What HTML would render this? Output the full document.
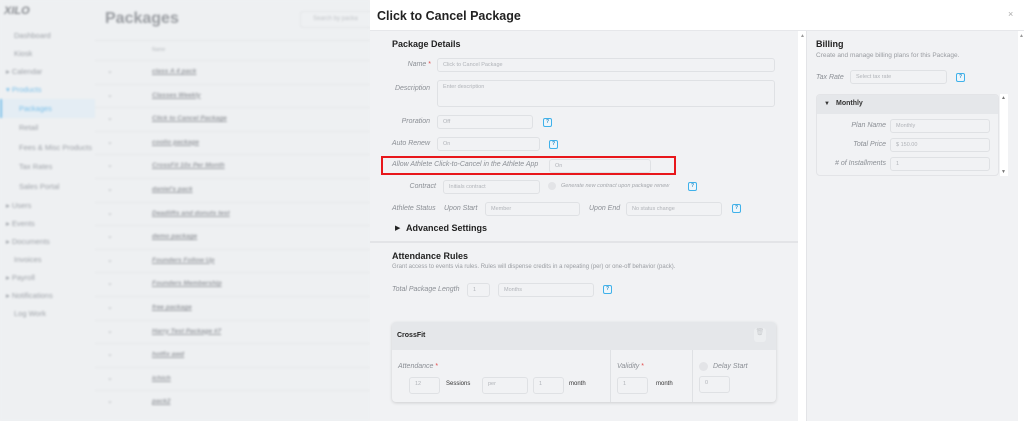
<!DOCTYPE html>
<html><head><meta charset="utf-8"><style>
*{box-sizing:border-box;margin:0;padding:0}
body{width:1024px;height:421px;overflow:hidden;font-family:"Liberation Sans",sans-serif;background:#f0f1f3;position:relative}
.bg{position:absolute;left:0;top:0;width:370px;height:421px;filter:blur(1.1px);color:#9a9ea4}
.side{position:absolute;left:0;top:0;width:95px;height:421px;background:#eef0f2}
.side div{position:absolute;font-size:7.5px;color:#9ea2a8}
.main{position:absolute;left:95px;top:0;width:275px;height:421px;background:#eef0f2}
.a{position:absolute}
.m{position:absolute;color:#333}
.lbl{position:absolute;font-size:7px;font-style:italic;color:#8b8f95;text-align:right}
.in{position:absolute;height:14px;border:1px solid #dfe1e4;border-radius:3px;background:#f1f2f4;font-size:5.5px;color:#b0b3b8;padding:3px 5px}
.q{position:absolute;width:9px;height:9px;border:1.5px solid #3fb1ea;border-radius:2px;font-size:5px;font-weight:bold;color:#2a8bc4;text-align:center;line-height:6px;background:#eef6fb}
.red{color:#e24b4b;font-style:normal}
</style></head><body>
<div class="bg">
 <div class="side">
  <div style="left:4px;top:5px;font-size:11px;font-weight:bold;color:#8a8d92;font-style:italic">XILO</div>
  <div style="left:14px;top:31px">Dashboard</div>
  <div style="left:14px;top:49px">Kiosk</div>
  <div style="left:6px;top:67px">▸ Calendar</div>
  <div style="left:6px;top:85px;color:#7cc1ea">▾ Products</div>
  <div style="left:0;top:99px;width:95px;height:19px;background:#e4edf4;border-left:2px solid #7cc1ea"></div>
  <div style="left:19px;top:104px;color:#7cc1ea">Packages</div>
  <div style="left:19px;top:123px">Retail</div>
  <div style="left:19px;top:143px">Fees &amp; Misc Products</div>
  <div style="left:19px;top:162px">Tax Rates</div>
  <div style="left:19px;top:182px">Sales Portal</div>
  <div style="left:6px;top:201px">▸ Users</div>
  <div style="left:6px;top:219px">▸ Events</div>
  <div style="left:6px;top:237px">▸ Documents</div>
  <div style="left:14px;top:255px">Invoices</div>
  <div style="left:6px;top:273px">▸ Payroll</div>
  <div style="left:6px;top:291px">▸ Notifications</div>
  <div style="left:14px;top:309px">Log Work</div>
 </div>
 <div class="main">
  <div class="a" style="left:10px;top:10px;font-size:16px;font-weight:bold;color:#9a9da2">Packages</div>
  <div class="a" style="left:205px;top:11px;width:80px;height:17px;border:1px solid #e2e4e6;border-radius:3px;font-size:6px;padding:4px 12px;color:#c0c3c7">Search by packa</div>
  <div class="a" style="left:0;top:40px;width:275px;height:1px;background:#e2e4e6"></div>
  <div class="a" style="left:57px;top:47px;font-size:5px;color:#b8bbbf">Name</div>
  <div id="rows"></div>
 </div>
</div>
<script>
var n=["class A 4 pack","Classes Weekly","Click to Cancel Package","coolio package","CrossFit 10x Per Month","daniel's pack","Deadlifts and donuts test","demo package","Founders Follow Up","Founders Membership","free package","Harry Test Package #7","hotfix awd","ichich","pack2"];
var h="";n.forEach(function(t,i){var y=72+i*23.6;h+='<div class="a" style="left:0;top:'+(y-12)+'px;width:275px;height:1px;background:#e4e6e8"></div><div class="a" style="left:12px;top:'+(y-5)+'px;font-size:7px;color:#b3b6ba">⌄</div><div class="a" style="left:57px;top:'+(y-4)+'px;font-size:6.5px;font-style:italic;font-weight:bold;text-decoration:underline;color:#9a9da2">'+t+'</div>'});
document.getElementById("rows").innerHTML=h;
</script>

<div class="a" style="left:370px;top:0;width:654px;height:31px;background:#fff;border-bottom:1px solid #e6e7ea"></div>
<div class="m" style="left:377px;top:9px;font-size:12.5px;font-weight:bold;color:#222">Click to Cancel Package</div>
<div class="m" style="left:1008px;top:9px;font-size:9px;color:#aaa">×</div>
<div class="a" style="left:370px;top:31px;width:428px;height:390px;background:#f1f2f4"></div>
<div class="a" style="left:798px;top:31px;width:8px;height:390px;background:#fff"></div>
<div class="m" style="left:800px;top:33px;font-size:5px;color:#999">▲</div>
<div class="a" style="left:806px;top:31px;width:212px;height:390px;background:#f1f2f4;border-left:1px solid #e3e4e7"></div>
<div class="a" style="left:1018px;top:31px;width:6px;height:390px;background:#fff"></div>
<div class="m" style="left:1019px;top:33px;font-size:5px;color:#999">▲</div>

<div class="m" style="left:392px;top:39px;font-size:9px;font-weight:bold;color:#222">Package Details</div>
<div class="lbl" style="left:380px;top:61px;width:51px">Name <span class="red">*</span></div>
<div class="in" style="left:437px;top:58px;width:338px">Click to Cancel Package</div>
<div class="lbl" style="left:380px;top:85px;width:50px">Description</div>
<div class="in" style="left:437px;top:80px;width:338px;height:27px">Enter description</div>
<div class="lbl" style="left:380px;top:118px;width:50px">Proration</div>
<div class="in" style="left:437px;top:115px;width:96px">Off</div>
<div class="q" style="left:543px;top:118px">?</div>
<div class="lbl" style="left:380px;top:140px;width:50px">Auto Renew</div>
<div class="in" style="left:437px;top:137px;width:103px">On</div>
<div class="q" style="left:549px;top:140px">?</div>
<div class="a" style="left:381px;top:156px;width:295px;height:19px;border:2px solid #e8171b"></div>
<div class="lbl" style="left:392px;top:161px;text-align:left">Allow Athlete Click-to-Cancel in the Athlete App</div>
<div class="in" style="left:549px;top:159px;width:102px">On</div>
<div class="lbl" style="left:380px;top:183px;width:56px">Contract</div>
<div class="in" style="left:443px;top:180px;width:97px">Initials contract</div>
<div class="a" style="left:548px;top:182px;width:8px;height:8px;border-radius:50%;background:#e3e4e7"></div>
<div class="lbl" style="left:561px;top:183px;font-size:5.5px;color:#a5a8ad">Generate new contract upon package renew</div>
<div class="q" style="left:688px;top:182px">?</div>
<div class="lbl" style="left:392px;top:205px;text-align:left">Athlete Status</div>
<div class="lbl" style="left:444px;top:205px;text-align:left">Upon Start</div>
<div class="in" style="left:485px;top:202px;width:95px">Member</div>
<div class="lbl" style="left:589px;top:205px;text-align:left">Upon End</div>
<div class="in" style="left:626px;top:202px;width:96px">No status change</div>
<div class="q" style="left:732px;top:204px">?</div>
<div class="m" style="left:395px;top:224px;font-size:7px;color:#222">▶</div>
<div class="m" style="left:406px;top:223px;font-size:9px;font-weight:bold;color:#222">Advanced Settings</div>
<div class="a" style="left:370px;top:241px;width:428px;height:2px;background:#e3e4e7"></div>

<div class="m" style="left:392px;top:251px;font-size:9px;font-weight:bold;color:#222">Attendance Rules</div>
<div class="m" style="left:392px;top:264px;font-size:6px;color:#9a9da2">Grant access to events via rules. Rules will dispense credits in a repeating (per) or one-off behavior (pack).</div>
<div class="lbl" style="left:392px;top:286px;text-align:left">Total Package Length</div>
<div class="in" style="left:467px;top:283px;width:23px">1</div>
<div class="in" style="left:498px;top:283px;width:96px">Months</div>
<div class="q" style="left:603px;top:285px">?</div>
<div class="a" style="left:392px;top:322px;width:384px;height:80px;border-radius:4px;background:#f1f2f4;box-shadow:0 1px 3px rgba(0,0,0,.15);overflow:hidden">
 <div class="a" style="left:0;top:0;width:384px;height:28px;background:#e5e7ea"></div>
 <div class="m" style="left:5px;top:10px;font-size:7px;font-weight:bold;color:#222">CrossFit</div>
 <div class="a" style="left:362px;top:6px;width:12px;height:14px;border-radius:3px;background:#eceef0;font-size:7px;color:#c9cbce;text-align:center">🗑</div>
 <div class="a" style="left:218px;top:28px;width:1px;height:52px;background:#dfe1e4"></div>
 <div class="a" style="left:300px;top:28px;width:1px;height:52px;background:#dfe1e4"></div>
 <div class="lbl" style="left:6px;top:41px;text-align:left">Attendance <span class="red">*</span></div>
 <div class="in" style="left:17px;top:55px;width:31px;height:17px">12</div>
 <div class="m" style="left:54px;top:59px;font-size:6px">Sessions</div>
 <div class="in" style="left:90px;top:55px;width:46px;height:17px">per</div>
 <div class="in" style="left:141px;top:55px;width:31px;height:17px">1</div>
 <div class="m" style="left:177px;top:59px;font-size:6px">month</div>
 <div class="lbl" style="left:225px;top:41px;text-align:left">Validity <span class="red">*</span></div>
 <div class="in" style="left:225px;top:55px;width:31px;height:17px">1</div>
 <div class="m" style="left:264px;top:59px;font-size:6px">month</div>
 <div class="a" style="left:307px;top:40px;width:9px;height:9px;border-radius:50%;background:#e3e4e7"></div>
 <div class="lbl" style="left:321px;top:41px;text-align:left">Delay Start</div>
 <div class="in" style="left:307px;top:54px;width:31px;height:17px">0</div>
</div>

<div class="m" style="left:816px;top:39px;font-size:9px;font-weight:bold;color:#222">Billing</div>
<div class="m" style="left:816px;top:52px;font-size:6.5px;color:#999ca1">Create and manage billing plans for this Package.</div>
<div class="lbl" style="left:816px;top:74px;text-align:left">Tax Rate</div>
<div class="in" style="left:850px;top:70px;width:97px">Select tax rate</div>
<div class="q" style="left:956px;top:73px">?</div>
<div class="a" style="left:816px;top:94px;width:183px;height:82px;border-radius:4px;background:#f1f2f4;border:1px solid #e3e4e7;overflow:hidden">
 <div class="a" style="left:0;top:0;width:183px;height:19px;background:#e5e7ea"></div>
 <div class="m" style="left:7px;top:6px;font-size:6px">▼</div>
 <div class="m" style="left:19px;top:5px;font-size:7px;font-weight:bold">Monthly</div>
</div>
<div class="lbl" style="left:816px;top:122px;width:70px">Plan Name</div>
<div class="in" style="left:890px;top:119px;width:100px">Monthly</div>
<div class="lbl" style="left:816px;top:141px;width:70px">Total Price</div>
<div class="in" style="left:890px;top:138px;width:100px">$ 150.00</div>
<div class="lbl" style="left:816px;top:160px;width:70px"># of Installments</div>
<div class="in" style="left:890px;top:157px;width:100px">1</div>
<div class="a" style="left:1000px;top:94px;width:8px;height:82px;background:#fff"></div>
<div class="m" style="left:1001px;top:95px;font-size:5px;color:#777">▲</div>
<div class="m" style="left:1001px;top:169px;font-size:5px;color:#777">▼</div>
</body></html>
